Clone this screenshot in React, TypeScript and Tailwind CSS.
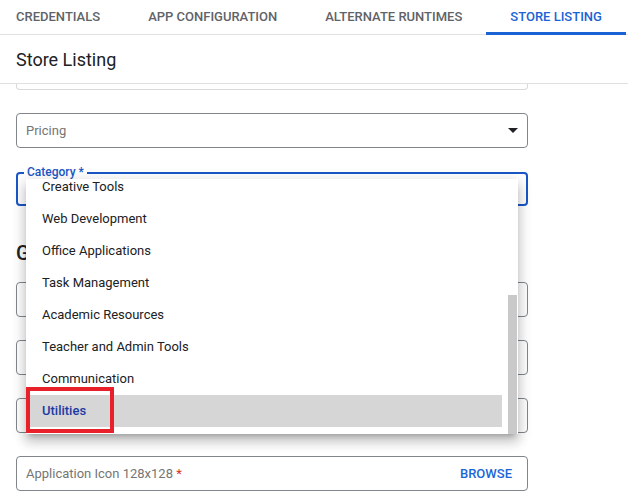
import React from "react"

const tabs = ["Credentials", "App Configuration", "Alternate Runtimes", "Store Listing"]

const categories = [
  "Creative Tools",
  "Web Development",
  "Office Applications",
  "Task Management",
  "Academic Resources",
  "Teacher and Admin Tools",
  "Communication",
  "Utilities",
]

function Field({ children }: { children?: React.ReactNode }) {
  return (
    <div className="flex h-[35px] items-center rounded-[4px] border border-[#80868b] pl-[9px] pr-[15px] text-[13px] text-[#757575]">
      {children}
    </div>
  )
}

export default function App() {
  return (
    <div
      className="relative h-[504px] w-[628px] overflow-hidden bg-white text-[#202124]"
      style={{ fontFamily: "Roboto, 'Liberation Sans', sans-serif" }}
    >
      {/* Tabs */}
      <div className="flex h-[35px] border-b border-[#e0e0e0]">
        <div className="-ml-2 flex">
          {tabs.map((t, i) => {
            const active = i === tabs.length - 1
            return (
              <div
                key={t}
                className={`relative flex items-center px-6 pb-px text-[13px] font-medium uppercase ${
                  active ? "text-[#1b63d4]" : "text-[#5f6368]"
                }`}
              >
                {t}
                {active && (
                  <span className="absolute bottom-[-1px] left-0 right-0 h-[3px] bg-[#1b63d4]" />
                )}
              </div>
            )
          })}
        </div>
      </div>

      {/* Section header */}
      <div className="flex h-[49px] items-center border-b border-[#e0e0e0] px-4 pt-px text-[18px]">
        Store Listing
      </div>

      {/* Form */}
      <div className="ml-4 w-[512px]">
        <div className="h-[6px] rounded-b-[4px] border-x border-b border-[#d9d9d9]" />

        <div className="mt-[23px]">
          <Field>
            <span className="flex-1">Pricing</span>
            <svg width="10" height="5" viewBox="0 0 10 5" className="mr-[-6px]">
              <path d="M0 0h10L5 5z" fill="#202124" />
            </svg>
          </Field>
        </div>

        <div className="relative mt-[24px] h-[34px] rounded-[4px] border-2 border-[#1a56c8]">
          <span className="absolute -top-[10px] left-[6px] bg-white px-[3px] text-[12px] font-medium leading-[16px] text-[#1a56c8]">
            Category *
          </span>
        </div>

        <div className="mt-[35px] h-6 text-[20px] font-medium leading-6">Graphic Assets</div>

        <div className="mt-[17px] flex flex-col gap-[23px]">
          <Field />
          <Field />
          <Field />
          <Field>
            <span className="flex-1">
              Application Icon 128x128 <span className="text-[#d93025]">*</span>
            </span>
            <span className="text-[13px] font-medium text-[#1a66d9]">BROWSE</span>
          </Field>
        </div>
      </div>

      {/* Category dropdown menu */}
      <div className="absolute left-[26px] top-[179px] h-[255px] w-[492px] overflow-hidden bg-white shadow-[0_5px_5px_-3px_rgba(0,0,0,0.2),0_8px_10px_1px_rgba(0,0,0,0.14),0_3px_14px_2px_rgba(0,0,0,0.12)]">
        <ul className="-mt-[8px] w-[476px]">
          {categories.map((c) => {
            const selected = c === "Utilities"
            return (
              <li
                key={c}
                className={`flex h-8 items-center px-4 text-[13px] ${
                  selected ? "bg-[#d6d6d6] font-medium text-[#1c3aa4]" : "text-[#202124]"
                }`}
              >
                {c}
              </li>
            )
          })}
        </ul>
        <div className="absolute left-[482px] top-[116px] h-[139px] w-[9px] bg-[#c9c9c9]" />
      </div>

      {/* Highlight annotation */}
      <div className="absolute left-[26px] top-[387px] h-[46px] w-[88px] border-4 border-[#e8202a]" />
    </div>
  )
}
